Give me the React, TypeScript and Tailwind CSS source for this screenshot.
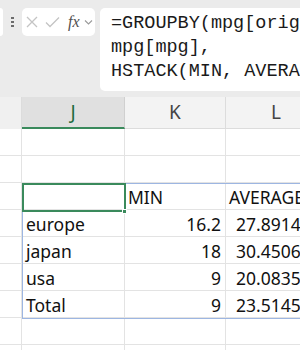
import React from "react";

const rows: string[][] = [
  ["", "", ""],
  ["", "", ""],
  ["", "MIN", "AVERAGE"],
  ["europe", "16.2", "27.8914286"],
  ["japan", "18", "30.4506329"],
  ["usa", "9", "20.0835341"],
  ["Total", "9", "23.5145729"],
  ["", "", ""],
  ["", "", ""],
];

export default function App() {
  return (
    <div className="relative w-[300px] h-[350px] overflow-hidden bg-white font-['Noto_Sans',sans-serif]">
      {/* formula bar */}
      <div className="flex items-start h-[97px] bg-[#ebebeb] pt-[8px]">
        <div className="w-[3px] h-[28px] bg-white rounded-r-[4px]" />
        <div className="w-[19px] h-[28px] flex flex-col items-center justify-center gap-[2px]">
          <div className="w-[3px] h-[2px] bg-[#6b6b6b]" />
          <div className="w-[3px] h-[2px] bg-[#6b6b6b]" />
          <div className="w-[3px] h-[2px] bg-[#6b6b6b]" />
        </div>
        <div className="w-[73px] h-[28px] bg-white rounded-[5px] flex items-center">
          <svg width="73" height="28" viewBox="0 0 73 28">
            <path d="M5 9 L15 19 M15 9 L5 19" stroke="#c4c4c4" strokeWidth="1.3" fill="none" />
            <path d="M24 14.5 L28 18.5 L37 9.5" stroke="#c4c4c4" strokeWidth="1.3" fill="none" />
            <text x="46" y="19" fontFamily="'Liberation Serif', serif" fontStyle="italic" fontSize="16" fill="#505050">fx</text>
            <path d="M63 12.5 L66.5 16 L70 12.5" stroke="#9a9a9a" strokeWidth="1.1" fill="none" />
          </svg>
        </div>
        <div className="ml-[5px] flex-1 h-[83px] bg-white rounded-l-[5px] pl-[11px] pt-[4px] font-['Liberation_Mono',monospace] text-[18.5px] leading-[24px] text-[#1a1a1a] whitespace-pre overflow-hidden">
          <div>=GROUPBY(mpg[origin],</div>
          <div>mpg[mpg],</div>
          <div>HSTACK(MIN, AVERAGE))</div>
        </div>
      </div>

      {/* column headers */}
      <div className="flex h-[32px] text-[19px] text-[#444]">
        <div className="w-[22px] shrink-0 bg-[#f0f0f0] border-r border-[#dcdcdc]" />
        <div className="w-[103px] shrink-0 bg-[#e0e0e0] border-r border-[#d0d0d0] border-b-2 border-b-[#3a8a5c] flex items-center justify-center text-[#1e6b40]">
          J
        </div>
        <div className="w-[101px] shrink-0 bg-[#f3f3f3] border-r border-[#dcdcdc] border-b border-b-[#dcdcdc] flex items-center justify-center">
          K
        </div>
        <div className="w-[100px] shrink-0 bg-[#f3f3f3] border-b border-[#dcdcdc] flex items-center justify-center">
          L
        </div>
      </div>

      {/* grid */}
      <div className="flex flex-col text-[17.5px] text-[#111]">
        {rows.map((r, i) => (
          <div key={i} className="flex h-[27px]">
            <div className="w-[22px] shrink-0 border-r border-b border-[#e3e3e3]" />
            <div className="w-[103px] shrink-0 border-r border-b border-[#e3e3e3] pl-[4px] pt-[2px] leading-[25px] whitespace-nowrap overflow-hidden">
              {r[0]}
            </div>
            <div className={`w-[101px] shrink-0 border-r border-b border-[#e3e3e3] pt-[2px] leading-[25px] whitespace-nowrap overflow-hidden ${i === 2 ? "pl-[3px]" : "text-right pr-[4px]"}`}>
              {r[1]}
            </div>
            <div className={`w-[100px] shrink-0 border-b border-[#e3e3e3] pt-[2px] leading-[25px] whitespace-nowrap overflow-hidden ${i === 2 ? "pl-[3px]" : "pl-[10px]"}`}>
              {r[2]}
            </div>
          </div>
        ))}
      </div>

      {/* spill range outline */}
      <div className="absolute left-[22px] top-[183px] w-[300px] h-[136px] border border-[#9db6e2] pointer-events-none" />
      {/* active cell */}
      <div className="absolute left-[22px] top-[183px] w-[104px] h-[29px] border-2 border-[#3a8a5c] pointer-events-none" />
      <div className="absolute left-[122px] top-[209px] w-[5px] h-[5px] bg-[#3a8a5c] border border-white pointer-events-none" />
    </div>
  );
}
